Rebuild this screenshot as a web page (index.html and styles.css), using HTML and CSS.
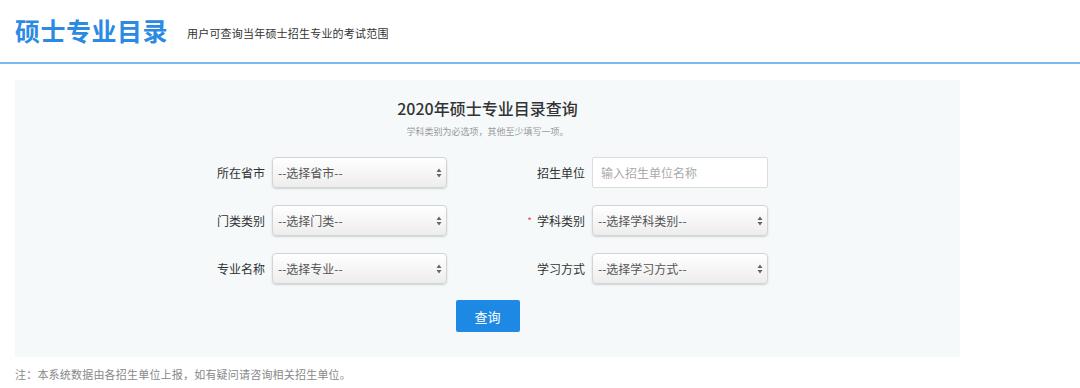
FILE: index.html
```html
<!DOCTYPE html>
<html lang="zh-CN">
<head>
  <meta charset="UTF-8"/>
  <meta name="viewport" content="width=device-width, initial-scale=1.0"/>
  <title>硕士专业目录</title>
  <link rel="stylesheet" href="styles.css">
</head>
<body>
  <div class="header">
    <h1 class="page-title">硕士专业目录</h1>
    <span class="page-desc">用户可查询当年硕士招生专业的考试范围</span>
  </div>

  <div class="panel">
    <h2 class="panel-title">2020年硕士专业目录查询</h2>
    <p class="panel-tip">学科类别为必选项，其他至少填写一项。</p>

    <form class="query-form" onsubmit="return false">
      <label class="field-label">所在省市</label>
      <div class="select-box">
        <select><option>--选择省市--</option></select>
        <svg class="arrows" viewBox="0 0 6 10" width="6" height="10"><path d="M3 0.5 L5.5 4 L0.5 4 Z M3 9.5 L5.5 6 L0.5 6 Z" fill="#666"/></svg>
      </div>

      <label class="field-label">招生单位</label>
      <input class="text-input" type="text" placeholder="输入招生单位名称">

      <label class="field-label">门类类别</label>
      <div class="select-box">
        <select><option>--选择门类--</option></select>
        <svg class="arrows" viewBox="0 0 6 10" width="6" height="10"><path d="M3 0.5 L5.5 4 L0.5 4 Z M3 9.5 L5.5 6 L0.5 6 Z" fill="#666"/></svg>
      </div>

      <label class="field-label"><span class="required">*</span>学科类别</label>
      <div class="select-box">
        <select><option>--选择学科类别--</option></select>
        <svg class="arrows" viewBox="0 0 6 10" width="6" height="10"><path d="M3 0.5 L5.5 4 L0.5 4 Z M3 9.5 L5.5 6 L0.5 6 Z" fill="#666"/></svg>
      </div>

      <label class="field-label">专业名称</label>
      <div class="select-box">
        <select><option>--选择专业--</option></select>
        <svg class="arrows" viewBox="0 0 6 10" width="6" height="10"><path d="M3 0.5 L5.5 4 L0.5 4 Z M3 9.5 L5.5 6 L0.5 6 Z" fill="#666"/></svg>
      </div>

      <label class="field-label">学习方式</label>
      <div class="select-box">
        <select><option>--选择学习方式--</option></select>
        <svg class="arrows" viewBox="0 0 6 10" width="6" height="10"><path d="M3 0.5 L5.5 4 L0.5 4 Z M3 9.5 L5.5 6 L0.5 6 Z" fill="#666"/></svg>
      </div>
    </form>

    <div class="actions">
      <button class="btn-query" type="button">查询</button>
    </div>
  </div>

  <p class="note">注：本系统数据由各招生单位上报，如有疑问请咨询相关招生单位。</p>
</body>
</html>
```

FILE: styles.css
```css
* {
  margin: 0;
  padding: 0;
  box-sizing: border-box;
}
body {
  background: #fff;
  color: #333;
  font-family: "Noto Sans CJK SC", "Noto Sans", sans-serif;
  width: 1080px;
}
.header {
  height: 64px;
  display: flex;
  align-items: center;
  padding: 0 0 2px 15px;
  border-bottom: 2px solid #7db9ee;
}
.page-title {
  font-size: 25px;
  font-weight: bold;
  color: #2b8ae2;
  letter-spacing: 0.5px;
  line-height: 30px;
}
.page-desc {
  margin-left: 19px;
  margin-top: 6px;
  font-size: 11px;
  color: #333;
  letter-spacing: 0.2px;
}
.panel {
  width: 945px;
  margin: 16px 0 0 15px;
  background: #f5f9fa;
  padding: 18px 0 25px;
}
.panel-title {
  text-align: center;
  font-size: 16px;
  font-weight: 500;
  line-height: 20px;
  color: #333;
}
.panel-tip {
  text-align: center;
  font-size: 9px;
  line-height: 12px;
  margin-top: 8px;
  color: #999;
}
.query-form {
  display: grid;
  grid-template-columns: 87px 175px 145px 176px;
  grid-auto-rows: 31px;
  row-gap: 17px;
  margin: 19px 0 0 170px;
}
.field-label {
  font-size: 12px;
  color: #333;
  text-align: right;
  line-height: 31px;
  padding-right: 7px;
}
.select-box + .field-label,
.text-input + .field-label {
  padding-right: 7px;
}
.required {
  color: #e84c4c;
  font-size: 10px;
  margin-right: 5px;
  vertical-align: 1px;
}
.select-box {
  position: relative;
  height: 31px;
}
.select-box select {
  appearance: none;
  -webkit-appearance: none;
  width: 100%;
  height: 100%;
  border: 1px solid #d4d4d4;
  border-radius: 4px;
  background: linear-gradient(#ffffff, #ededed);
  box-shadow: 0 1px 2px rgba(0, 0, 0, 0.15);
  font-family: inherit;
  font-size: 12px;
  color: #555;
  padding-left: 5px;
  outline: none;
}
.select-box .arrows {
  position: absolute;
  right: 5px;
  top: 11px;
  pointer-events: none;
}
.text-input {
  height: 31px;
  border: 1px solid #dcdcdc;
  border-radius: 2px;
  background: #fff;
  font-family: inherit;
  font-size: 12px;
  padding-left: 8px;
  outline: none;
}
.text-input::placeholder {
  color: #aaa;
}
.actions {
  margin-top: 16px;
  text-align: center;
}
.btn-query {
  width: 64px;
  height: 32px;
  background: #1d89e4;
  color: #fff;
  border: none;
  border-radius: 2px;
  font-family: inherit;
  font-size: 13px;
  cursor: pointer;
}
.note {
  margin: 9px 0 0 15px;
  font-size: 11px;
  line-height: 16px;
  color: #888;
  letter-spacing: 0.2px;
}
```
